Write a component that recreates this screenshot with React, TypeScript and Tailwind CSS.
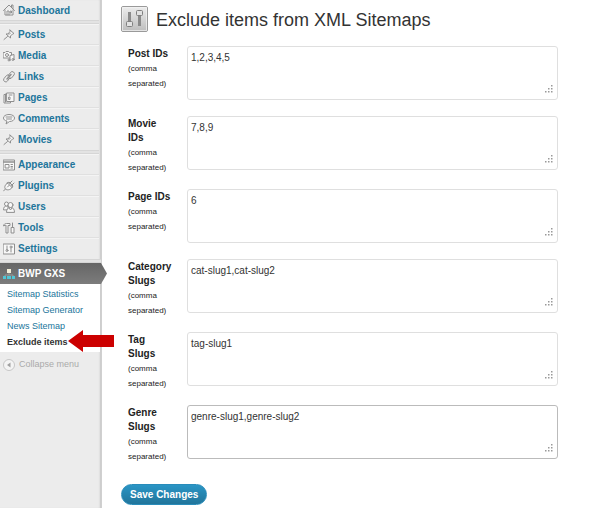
import { useState } from 'react';
import type { ReactNode } from 'react';

interface MenuItem {
  label: string;
  icon: ReactNode;
}

interface ExcludeField {
  id: string;
  label: string;
  value: string;
  active?: boolean;
}

function Glyph({ children }: { children: ReactNode }) {
  return (
    <svg
      className="h-3 w-3 shrink-0"
      viewBox="0 0 24 24"
      fill="none"
      stroke="#8f8f8f"
      strokeWidth="2"
      strokeLinecap="round"
      strokeLinejoin="round"
      aria-hidden="true"
    >
      {children}
    </svg>
  );
}

const HomeIcon = (
  <Glyph>
    <path d="M4 12v10h16V12" fill="#f8f8f8" />
    <path d="M1 13 12 2l11 11M17 6V2h3v7" />
    <path d="M8 22v-8h4v8M15 14h2v4h-2z" />
  </Glyph>
);

const PinIcon = (
  <Glyph>
    <path d="M14 2l8 7-3 1-4 4 0 4-9-8 4 0 4-5z" fill="#f8f8f8" />
    <path d="M9 15 2 21M12 11l3-3" />
  </Glyph>
);

const MediaIcon = (
  <Glyph>
    <path d="M1 5h3l2-2h5l2 2h4v11H1z" fill="#f8f8f8" />
    <circle cx="8" cy="10" r="3" />
    <path d="M14 20v-9l8-2v10" fill="#f8f8f8" />
    <circle cx="12" cy="20" r="2" />
    <circle cx="20" cy="19" r="2" />
  </Glyph>
);

const LinkIcon = (
  <Glyph>
    <path d="M10 10l5-7a4 4 0 0 1 7 5l-5 6a4 4 0 0 1-6 0" />
    <path d="M14 13l-5 7a4 4 0 0 1-7-5l5-6a4 4 0 0 1 6 0" />
    <path d="M8 16l8-9" strokeWidth="3" />
  </Glyph>
);

const PagesIcon = (
  <Glyph>
    <path d="M7 5H2v17h13v-3" fill="#f8f8f8" />
    <path d="M8 2h14v17H8z" fill="#f8f8f8" />
    <path d="M5 4v16M12 6h6M12 10h2v5h-2z" />
  </Glyph>
);

const CommentIcon = (
  <Glyph>
    <path d="M12 3c7 0 11 3 11 7s-4 7-10 7l-7 5 2-6c-5-1-7-3-7-6 0-4 4-7 11-7z" fill="#f8f8f8" />
    <path d="M6 8h12M7 12h10" />
  </Glyph>
);

const AppearanceIcon = (
  <Glyph>
    <path d="M1 2h22v20H1z" fill="#f8f8f8" />
    <path d="M1 6h22" strokeWidth="3" />
    <path d="M5 11h7v7H5zM16 11h3M16 15h3M16 18h3" />
  </Glyph>
);

const PlugIcon = (
  <Glyph>
    <path d="M9 6l9 9c-3 5-10 6-13 3S4 9 9 6z" fill="#f8f8f8" />
    <path d="M8 7l4-3 8 8-3 4M13 7l5-5M17 11l5-5M5 18l-4 4M9 14l4-4" />
  </Glyph>
);

const UsersIcon = (
  <Glyph>
    <path d="M1 17c0-4 2-7 6-7h3v7z" fill="#f8f8f8" />
    <circle cx="7" cy="6" r="4" fill="#f8f8f8" />
    <path d="M7 22c0-6 3-9 8-9s8 3 8 9zM12 14l3 4 3-4" fill="#f8f8f8" />
    <circle cx="15" cy="8" r="5" fill="#f8f8f8" />
  </Glyph>
);

const ToolsIcon = (
  <Glyph>
    <path d="M1 7c1-3 3-4 6-4h7v4h-4v15H6V7z" fill="#f8f8f8" />
    <path d="M19 2v9" />
    <path d="M17 11h5v11h-5z" fill="#f8f8f8" />
  </Glyph>
);

const SettingsIcon = (
  <Glyph>
    <path d="M1 2h22v20H1z" fill="#f8f8f8" />
    <path d="M8 6v7M16 11v7" />
    <circle cx="8" cy="15" r="2" />
    <circle cx="16" cy="8" r="2" />
  </Glyph>
);

// Each group is closed by a double rule in the menu
const MENU_GROUPS: MenuItem[][] = [
  [
    { label: 'Posts', icon: PinIcon },
    { label: 'Media', icon: MediaIcon },
    { label: 'Links', icon: LinkIcon },
    { label: 'Pages', icon: PagesIcon },
    { label: 'Comments', icon: CommentIcon },
    { label: 'Movies', icon: PinIcon },
  ],
  [
    { label: 'Appearance', icon: AppearanceIcon },
    { label: 'Plugins', icon: PlugIcon },
    { label: 'Users', icon: UsersIcon },
    { label: 'Tools', icon: ToolsIcon },
    { label: 'Settings', icon: SettingsIcon },
  ],
];

const SUBMENU = ['Sitemap Statistics', 'Sitemap Generator', 'News Sitemap', 'Exclude items'];

const FIELDS: ExcludeField[] = [
  { id: 'post', label: 'Post IDs', value: '1,2,3,4,5' },
  { id: 'movie', label: 'Movie IDs', value: '7,8,9' },
  { id: 'page', label: 'Page IDs', value: '6' },
  { id: 'category', label: 'Category Slugs', value: 'cat-slug1,cat-slug2' },
  { id: 'tag', label: 'Tag Slugs', value: 'tag-slug1' },
  { id: 'genre', label: 'Genre Slugs', value: 'genre-slug1,genre-slug2', active: true },
];

function MenuLink({ label, icon }: MenuItem) {
  return (
    <li className="border-b border-[#e0e0e0] last:border-transparent">
      <a
        href="#"
        className="flex h-5 items-center gap-[3px] border-t border-[#f4f4f4] pl-[3px] text-[10px] font-bold text-[#21759b]"
      >
        {icon}
        {label}
      </a>
    </li>
  );
}

function Separator() {
  return <div className="h-1 border-y border-[#d6d6d6] bg-[#e3e3e3]" />;
}

function Sidebar() {
  return (
    <nav className="relative z-10 w-[102px] shrink-0 border-r border-[#d0d0d0] bg-[#ececec] shadow-[inset_-2px_0_2px_-1px_#c4c4c4]">
      <a href="#" className="flex h-5 items-center gap-[3px] pl-[3px] text-[10px] font-bold text-[#21759b]">
        {HomeIcon}
        Dashboard
      </a>
      {MENU_GROUPS.map((group) => (
        <div key={group[0].label} className="mr-0.5">
          <Separator />
          <ul>
            {group.map((item) => (
              <MenuLink key={item.label} {...item} />
            ))}
          </ul>
        </div>
      ))}
      <Separator />

      <a
        href="#"
        className="relative flex h-[21px] items-center gap-[3px] bg-linear-to-b from-[#666] to-[#7c7c7c] pl-[3px] text-[10px] font-bold text-white"
      >
        <svg className="h-3 w-3 shrink-0" viewBox="0 0 12 12" aria-hidden="true">
          <path d="M6 5v2M2 8V7h8v1" stroke="#9a9a9a" fill="none" />
          <path d="M4 1h4v4H4z" fill="#f3efd9" />
          <path d="M0 8h3v3H0zM4 8h4v3H4zM9 8h3v3H9z" fill="#4fc6d6" />
        </svg>
        BWP GXS
        <svg className="absolute top-0 left-full h-[21px] w-1.5" viewBox="0 0 6 21" aria-hidden="true">
          <defs>
            <linearGradient id="tip" x1="0" y1="0" x2="0" y2="1">
              <stop offset="0" stopColor="#666" />
              <stop offset="1" stopColor="#7c7c7c" />
            </linearGradient>
          </defs>
          <path d="M0 0 6 10.500 0 21z" fill="url(#tip)" />
        </svg>
      </a>
      <ul className="mr-px bg-white py-0.5 pl-[7px] text-[9px] leading-4">
        {SUBMENU.map((label) => {
          const current = label === 'Exclude items';
          return (
            <li key={label} className="relative">
              <a href="#" className={current ? 'font-bold text-[#333]' : 'text-[#21759b]'}>
                {label}
              </a>
              {current && (
                <svg className="absolute -top-1 left-[61px] h-[22px] w-[46px]" viewBox="0 0 46 22" aria-hidden="true">
                  <path d="M0 11 15 0v5h31v12H15v5z" fill="#c00" />
                </svg>
              )}
            </li>
          );
        })}
      </ul>
      <button type="button" className="flex h-[26px] items-center gap-1 pl-[3px] text-[9px] text-[#aaa]">
        <svg className="h-3 w-3" viewBox="0 0 12 12" aria-hidden="true">
          <circle cx="6" cy="6" r="5.500" fill="#f4f4f4" stroke="#c6c6c6" />
          <path d="M7.500 3.500v5L4 6z" fill="#a0a0a0" />
        </svg>
        Collapse menu
      </button>
    </nav>
  );
}

function FieldRow({ field }: { field: ExcludeField }) {
  const [value, setValue] = useState(field.value);

  return (
    <div className="flex items-start">
      <label
        htmlFor={field.id}
        className="block w-[59px] shrink-0 pt-px pr-3.5 pb-3.5 text-[10px] leading-[14px] font-bold text-[#222]"
      >
        {field.label}
        <small className="block text-[8px] leading-[15px] font-normal">(comma separated)</small>
      </label>
      <div className="relative mb-4 flex-1">
        <textarea
          id={field.id}
          value={value}
          onChange={(e) => setValue(e.target.value)}
          className={`block h-[54px] w-full resize-none rounded-[3px] border px-[3px] py-1 text-[10px] leading-[14px] text-[#333] outline-none ${
            field.active ? 'border-[#bbb]' : 'border-[#dfdfdf]'
          }`}
        />
        <svg className="pointer-events-none absolute right-[5px] bottom-1.5 h-[9px] w-[9px]" viewBox="0 0 9 9" aria-hidden="true">
          <path
            d="M7 0h1.500v1.500H7zM4 3h1.500v1.500H4zM7 3h1.500v1.500H7zM1 6h1.500v1.500H1zM4 6h1.500v1.500H4zM7 6h1.500v1.500H7z"
            fill="#999"
          />
        </svg>
      </div>
    </div>
  );
}

export default function App() {
  return (
    <div className="flex min-h-screen bg-white font-['Liberation_Sans',Arial,sans-serif]">
      <Sidebar />
      <main className="min-w-0 flex-1 pr-[42px] pl-[19px]">
        <header className="flex items-center gap-2 pt-1.5">
          <svg className="h-[27px] w-[27px] shrink-0" viewBox="0 0 27 27" aria-hidden="true">
            <defs>
              <linearGradient id="plate" x1="0" y1="0" x2="0" y2="1">
                <stop offset="0" stopColor="#ededed" />
                <stop offset="1" stopColor="#bdbdbd" />
              </linearGradient>
            </defs>
            <rect x="0.500" y="0.500" width="26" height="25" rx="1.500" fill="url(#plate)" stroke="#9a9a9a" />
            <rect x="1.500" y="1.500" width="24" height="23" fill="none" stroke="#f4f4f4" strokeOpacity="0.700" />
            <path d="M7 6h3v10H7zM17 9h3v11h-3z" fill="#8a8a8a" />
            <rect x="5.500" y="15.500" width="6" height="5" rx="1" fill="#e2e2e2" stroke="#808080" />
            <rect x="15.500" y="4.500" width="6" height="5" rx="1" fill="#e2e2e2" stroke="#808080" />
          </svg>
          <h1 className="text-[18px] leading-[26px] text-[#333]">Exclude items from XML Sitemaps</h1>
        </header>
        <form onSubmit={(e) => e.preventDefault()}>
          <div className="pt-[13px] pl-[7px]">
            {FIELDS.map((field) => (
              <FieldRow key={field.id} field={field} />
            ))}
          </div>
          <button
            type="submit"
            className="mt-1.5 h-[21px] rounded-full border border-[#298cba] bg-linear-to-b from-[#2a95c5] to-[#21759b] px-2 text-[10px] leading-none font-bold text-white"
          >
            Save Changes
          </button>
        </form>
      </main>
    </div>
  );
}
